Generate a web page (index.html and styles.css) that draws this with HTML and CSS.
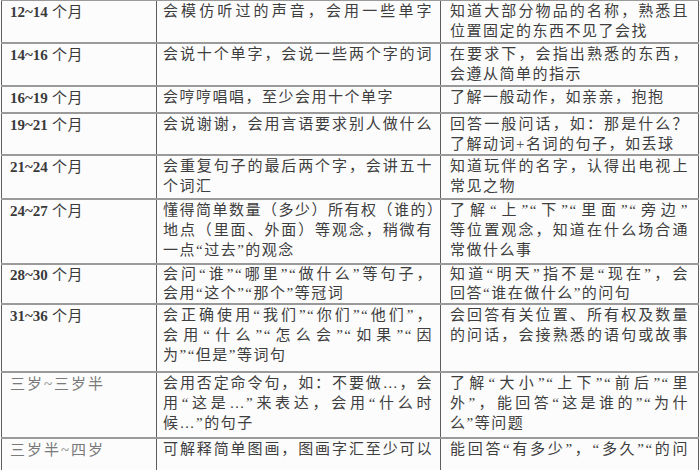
FILE: index.html
```html
<!DOCTYPE html>
<html lang="zh-CN">
<head>
<meta charset="utf-8">
<title>幼儿语言发展表</title>
<link rel="stylesheet" href="styles.css">
</head>
<body>
<table class="chart">
  <colgroup>
    <col class="c-age">
    <col class="c-say">
    <col class="c-know">
  </colgroup>
  <tbody>
    <tr class="r43">
      <td class="age"><span class="num">12~14</span> 个月</td>
      <td class="say"><span class="ln j">会模仿听过的声音，会用一些单字</span></td>
      <td class="know"><span class="ln j">知道大部分物品的名称，熟悉且</span><span class="ln">位置固定的东西不见了会找</span></td>
    </tr>
    <tr class="r43">
      <td class="age"><span class="num">14~16</span> 个月</td>
      <td class="say"><span class="ln j">会说十个单字，会说一些两个字的词</span></td>
      <td class="know"><span class="ln j">在要求下，会指出熟悉的东西，</span><span class="ln">会遵从简单的指示</span></td>
    </tr>
    <tr class="r27">
      <td class="age"><span class="num">16~19</span> 个月</td>
      <td class="say"><span class="ln">会哼哼唱唱，至少会用十个单字</span></td>
      <td class="know"><span class="ln">了解一般动作，如亲亲，抱抱</span></td>
    </tr>
    <tr class="r41">
      <td class="age"><span class="num">19~21</span> 个月</td>
      <td class="say"><span class="ln j">会说谢谢，会用言语要求别人做什么</span></td>
      <td class="know"><span class="ln j">回答一般问话，如：那是什么？</span><span class="ln">了解动词+名词的句子，如丢球</span></td>
    </tr>
    <tr class="r44">
      <td class="age"><span class="num">21~24</span> 个月</td>
      <td class="say"><span class="ln j">会重复句子的最后两个字，会讲五十</span><span class="ln">个词汇</span></td>
      <td class="know"><span class="ln j">知道玩伴的名字，认得出电视上</span><span class="ln">常见之物</span></td>
    </tr>
    <tr class="r65">
      <td class="age"><span class="num">24~27</span> 个月</td>
      <td class="say"><span class="ln j">懂得简单数量（多少）所有权（谁的）</span><span class="ln j">地点（里面、外面）等观念，稍微有</span><span class="ln">一点“过去”的观念</span></td>
      <td class="know"><span class="ln j">了解“上”“下”“里面”“旁边”</span><span class="ln j">等位置观念，知道在什么场合通</span><span class="ln">常做什么事</span></td>
    </tr>
    <tr class="r40 tight">
      <td class="age"><span class="num">28~30</span> 个月</td>
      <td class="say"><span class="ln j">会问“谁”“哪里”“做什么”等句子，</span><span class="ln">会用“这个”“那个”等冠词</span></td>
      <td class="know"><span class="ln j">知道“明天”指不是“现在”，会</span><span class="ln">回答“谁在做什么”的问句</span></td>
    </tr>
    <tr class="r68">
      <td class="age"><span class="num">31~36</span> 个月</td>
      <td class="say"><span class="ln j">会正确使用“我们”“你们”“他们”，</span><span class="ln j">会用“什么”“怎么会”“如果”“因</span><span class="ln">为”“但是”等词句</span></td>
      <td class="know"><span class="ln j">会回答有关位置、所有权及数量</span><span class="ln j">的问话，会接熟悉的语句或故事</span></td>
    </tr>
    <tr class="r66">
      <td class="age light">三岁~三岁半</td>
      <td class="say"><span class="ln j">会用否定命令句，如：不要做…，会</span><span class="ln j">用“这是…”来表达，会用“什么时</span><span class="ln">候…”的句子</span></td>
      <td class="know"><span class="ln j">了解“大小”“上下”“前后”“里</span><span class="ln j">外”，能回答“这是谁的”“为什</span><span class="ln">么”等问题</span></td>
    </tr>
    <tr class="r43">
      <td class="age light">三岁半~四岁</td>
      <td class="say"><span class="ln j">可解释简单图画，图画字汇至少可以</span></td>
      <td class="know"><span class="ln j">能回答“有多少”，“多久”“的问</span></td>
    </tr>
  </tbody>
</table>
</body>
</html>
```

FILE: styles.css
```css
html, body {
  margin: 0;
  padding: 0;
  background: #fcfcfc;
  overflow: hidden;
}

.chart {
  border-collapse: collapse;
  table-layout: fixed;
  width: 697px;
  margin: -1px 0 0 1px;
  font-family: "Liberation Serif", "Noto Sans CJK SC", serif;
  font-size: 15px;
  line-height: 20px;
  letter-spacing: 1.5px;
  color: #3e3e3e;
}

.c-age { width: 155px; }
.c-say { width: 284px; }
.c-know { width: 258px; }

.chart td {
  vertical-align: top;
  padding: 0 6px;
  border-top: 2px solid #9a9a9a;
  border-bottom: 2px solid #9a9a9a;
  border-left: 1px solid #5e5e5e;
  border-right: 1px solid #5e5e5e;
  white-space: nowrap;
}

.chart td.age {
  padding-left: 8px;
  padding-top: 1px;
  color: #3a3a3a;
  letter-spacing: 0.5px;
}

.chart td.age .num {
  font-weight: bold;
  letter-spacing: 0;
}

.chart td.age.light {
  color: #7a7a7a;
  letter-spacing: 2px;
}

.chart td.say {
  padding-left: 6px;
  padding-right: 7px;
}

.chart td.know {
  padding-left: 9px;
  padding-right: 9px;
}

.ln {
  display: block;
}

.ln.j {
  text-align: justify;
  text-align-last: justify;
}

.tight td {
  line-height: 19px;
}

.r27 { height: 27px; }
.r40 { height: 40px; }
.r41 { height: 41px; }
.r43 { height: 43px; }
.r44 { height: 44px; }
.r65 { height: 65px; }
.r66 { height: 66px; }
.r68 { height: 68px; }
```
